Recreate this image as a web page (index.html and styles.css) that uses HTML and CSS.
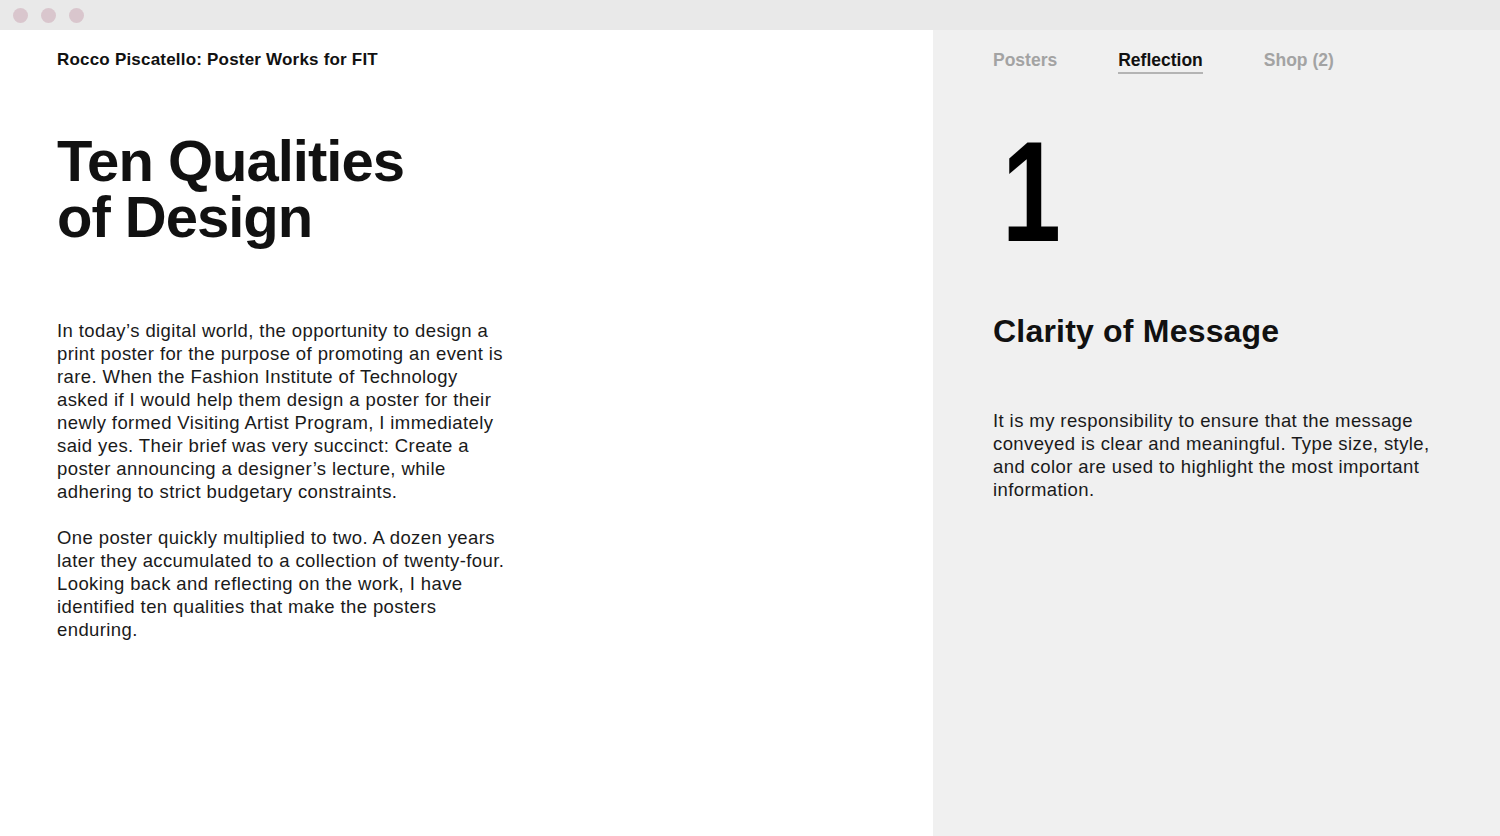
FILE: index.html
```html
<!DOCTYPE html>
<html lang="en">
<head>
<meta charset="utf-8">
<title>Rocco Piscatello: Poster Works for FIT</title>
<link rel="stylesheet" href="styles.css">
</head>
<body>
<div class="window">
  <div class="titlebar">
    <span class="dot"></span><span class="dot"></span><span class="dot"></span>
  </div>
  <div class="content">
    <main class="left">
      <div class="site-title">Rocco Piscatello: Poster Works for FIT</div>
      <h1 class="headline"><span class="hl-line">Ten Qualities</span><span class="hl-line">of Design</span></h1>
      <div class="intro">
        <p>In today’s digital world, the opportunity to design a<br>print poster for the purpose of promoting an event is<br>rare. When the Fashion Institute of Technology<br>asked if I would help them design a poster for their<br>newly formed Visiting Artist Program, I immediately<br>said yes. Their brief was very succinct: Create a<br>poster announcing a designer’s lecture, while<br>adhering to strict budgetary constraints.</p>
        <p>One poster quickly multiplied to two. A dozen years<br>later they accumulated to a collection of twenty-four.<br>Looking back and reflecting on the work, I have<br>identified ten qualities that make the posters<br>enduring.</p>
      </div>
    </main>
    <aside class="right">
      <nav class="nav">
        <a class="nav-item">Posters</a>
        <a class="nav-item active">Reflection</a>
        <a class="nav-item">Shop (2)</a>
      </nav>
      <div class="number">1</div>
      <h2 class="quality">Clarity of Message</h2>
      <p class="desc">It is my responsibility to ensure that the message<br>conveyed is clear and meaningful. Type size, style,<br>and color are used to highlight the most important<br>information.</p>
    </aside>
  </div>
</div>
</body>
</html>
```
FILE: styles.css
```css
* { box-sizing: border-box; }
html, body {
  margin: 0;
  padding: 0;
  height: 100%;
}
body {
  font-family: "Liberation Sans", Arial, sans-serif;
  color: #111;
  background: #fff;
}
.window {
  display: flex;
  flex-direction: column;
  height: 836px;
  overflow: hidden;
}
.titlebar {
  height: 30px;
  flex: 0 0 30px;
  background: #e9e9e9;
  display: flex;
  align-items: center;
  gap: 13px;
  padding-left: 13px;
}
.dot {
  width: 15px;
  height: 15px;
  border-radius: 50%;
  background: #d9c6cd;
}
.content {
  flex: 1;
  display: flex;
}
.left {
  width: 933px;
  flex: 0 0 933px;
  background: #fff;
  padding: 19px 0 0 57px;
}
.site-title {
  font-size: 17px;
  font-weight: bold;
  line-height: 22px;
  letter-spacing: 0.2px;
}
.headline {
  margin: 62px 0 0;
  font-size: 58px;
  font-weight: bold;
  letter-spacing: -1px;
  display: flex;
  flex-direction: column;
  gap: 1px;
}
.hl-line {
  display: block;
  height: 55px;
  line-height: 55px;
}
.intro {
  margin-top: 75px;
  width: 540px;
}
.intro p, .desc {
  margin: 0 0 23px;
  font-size: 18.5px;
  line-height: 23px;
  letter-spacing: 0.4px;
  color: #1a1a1a;
  white-space: nowrap;
}
.right {
  flex: 1;
  background: #f0f0f0;
  padding: 18px 0 0 60px;
}
.nav {
  display: flex;
  gap: 61px;
}
.nav-item {
  font-size: 17.5px;
  font-weight: bold;
  color: #a3a3a3;
  line-height: 24px;
  border-bottom: 2px solid transparent;
}
.nav-item.active {
  color: #111;
  border-bottom-color: #b4b4b4;
}
.number {
  margin: 46px 0 0 9px;
  font-size: 143px;
  font-weight: bold;
  line-height: 1;
  color: #000;
  transform: scaleX(0.74);
  transform-origin: left top;
}
.quality {
  margin: 48px 0 0;
  font-size: 32px;
  line-height: 40px;
  font-weight: bold;
  letter-spacing: 0.2px;
}
.desc {
  margin-top: 58px;
}
```
